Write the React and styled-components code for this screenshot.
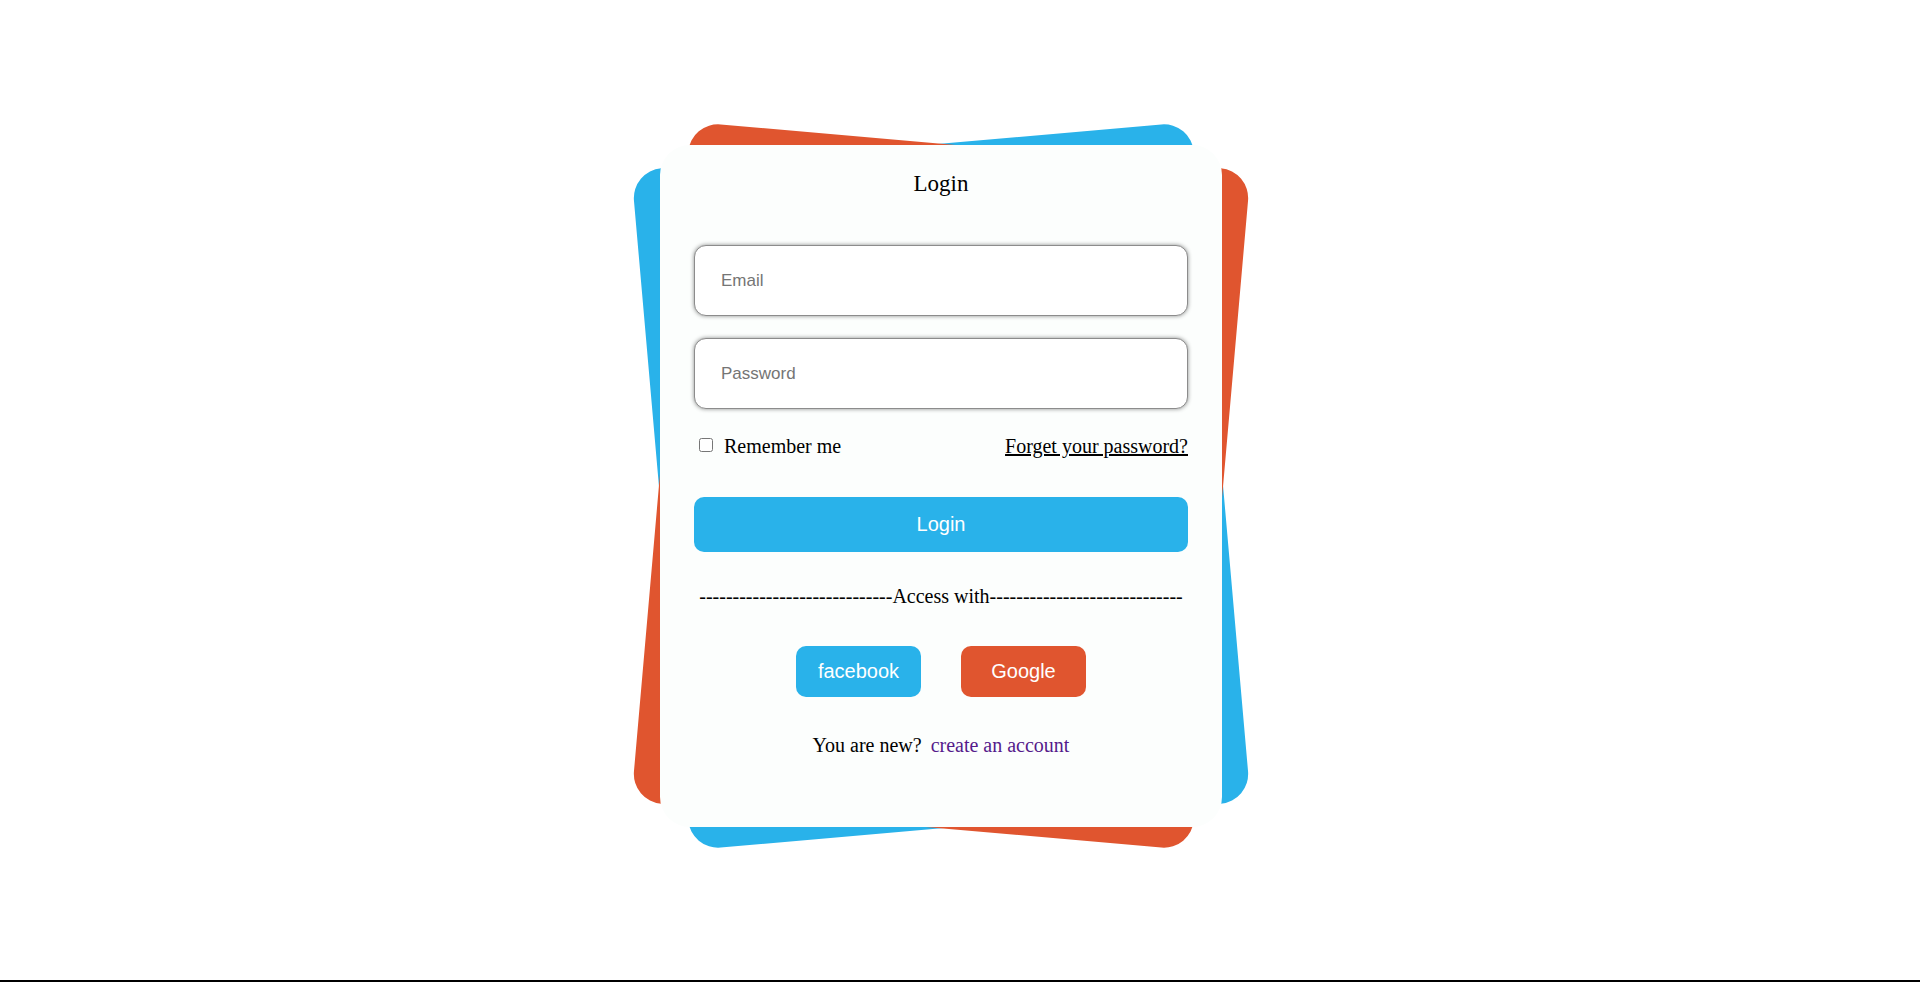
import React from "react"
import styled, { createGlobalStyle } from "styled-components"

const GlobalStyle = createGlobalStyle`
  html, body {
    margin: 0;
    padding: 0;
    background: #ffffff;
    overflow: hidden;
  }
  body {
    font-family: "Liberation Serif", "Times New Roman", serif;
  }
`

const Page = styled.div`
  display: flex;
  align-items: center;
  justify-content: center;
  height: 972px;
  padding: 0 38px 8px 0;
  border-bottom: 2px solid #000;
`

const Frame = styled.div`
  position: relative;
  width: 562px;
  height: 682px;
  z-index: 0;

  &::before,
  &::after {
    content: "";
    position: absolute;
    inset: 0;
    border-radius: 30px;
    z-index: -1;
  }

  &::before {
    background: #29b2ea;
    transform: rotate(-5deg);
  }

  &::after {
    background: #e0552f;
    transform: rotate(5deg);
  }
`

const Card = styled.div`
  display: flex;
  flex-direction: column;
  box-sizing: border-box;
  width: 100%;
  height: 100%;
  padding: 26px 34px 0;
  background: #fcfefd;
  border-radius: 30px;
`

const Title = styled.h3`
  margin: 0 0 48px;
  font-size: 23px;
  line-height: 26px;
  font-weight: normal;
  text-align: center;
  color: #000;
`

const Field = styled.input`
  box-sizing: border-box;
  width: 100%;
  height: 71px;
  margin: 0 0 ${props => props.$gap}px;
  padding: 0 0 0 26px;
  border: 1px solid #8c8c8c;
  border-radius: 12px;
  box-shadow: 0 0 4px rgba(0, 0, 0, 0.45);
  background: #fff;
  font-family: "Liberation Sans", Arial, sans-serif;
  font-size: 17px;
  color: #222;
  outline: none;

  &::placeholder {
    color: #757575;
  }
`

const OptionsRow = styled.div`
  display: flex;
  align-items: center;
  justify-content: space-between;
  height: 23px;
  margin: 0 0 39px;
  font-size: 20px;
  line-height: 23px;
  color: #000;
`

const Remember = styled.label`
  display: flex;
  align-items: center;

  input {
    width: 14px;
    height: 14px;
    margin: 0 11px 3px 5px;
  }
`

const PlainLink = styled.a`
  color: ${props => props.$color || "#000"};
  text-decoration: ${props => (props.$underline ? "underline" : "none")};
  cursor: pointer;
`

const Button = styled.button`
  box-sizing: border-box;
  width: ${props => props.$width || "100%"};
  height: ${props => props.$height || 55}px;
  padding: 0;
  border: none;
  border-radius: 10px;
  background: ${props => props.$bg || "#29b2ea"};
  color: #fff;
  font-family: "Liberation Sans", Arial, sans-serif;
  font-size: 20px;
  cursor: pointer;
`

const Divider = styled.div`
  margin: 33px 0 38px;
  font-size: 20px;
  line-height: 23px;
  text-align: center;
  white-space: nowrap;
  color: #000;
`

const Socials = styled.div`
  display: flex;
  justify-content: center;
  gap: 40px;
`

const Signup = styled.p`
  margin: 37px 0 0;
  font-size: 20px;
  line-height: 23px;
  text-align: center;
  color: #000;

  a {
    margin-left: 9px;
  }
`

const dashes = "-".repeat(29)

export default function App() {
  return (
    <>
      <GlobalStyle />
      <Page>
        <Frame>
          <Card>
            <Title>Login</Title>
            <Field type="email" placeholder="Email" $gap={22} />
            <Field type="password" placeholder="Password" $gap={26} />
            <OptionsRow>
              <Remember>
                <input type="checkbox" />
                Remember me
              </Remember>
              <PlainLink $underline>Forget your password?</PlainLink>
            </OptionsRow>
            <Button>Login</Button>
            <Divider>
              {dashes}Access with{dashes}
            </Divider>
            <Socials>
              <Button $width="125px" $height={51} $bg="#29b2ea">facebook</Button>
              <Button $width="125px" $height={51} $bg="#e0552f">Google</Button>
            </Socials>
            <Signup>
              You are new?<PlainLink $color="#551a8b">create an account</PlainLink>
            </Signup>
          </Card>
        </Frame>
      </Page>
    </>
  )
}
